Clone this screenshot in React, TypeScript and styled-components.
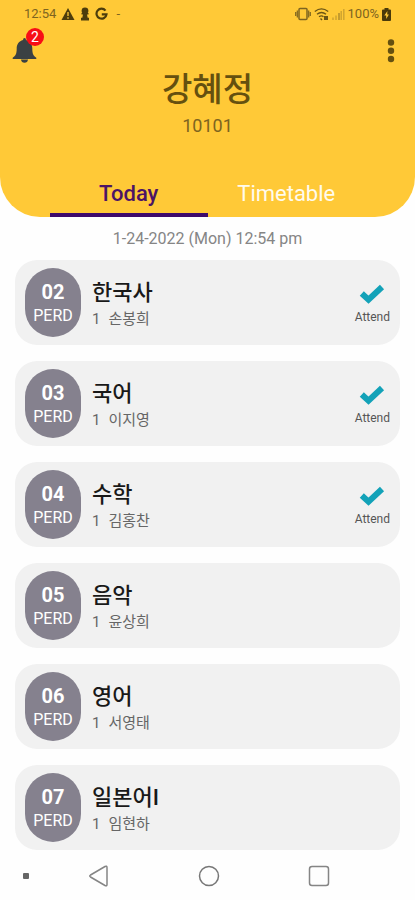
import React from "react";
import styled, { createGlobalStyle } from "styled-components";

const GlobalStyle = createGlobalStyle`
  *, *::before, *::after { box-sizing: border-box; }
  body {
    margin: 0;
    background: #fefefe;
    font-family: Roboto, "Noto Sans CJK KR", sans-serif;
  }
  button { border: 0; padding: 0; background: none; font: inherit; color: inherit; cursor: pointer; }
  h1, h2, p, ul { margin: 0; padding: 0; }
  svg { display: block; flex: none; }
`;

const Screen = styled.div`
  min-height: 100vh;
  display: flex;
  flex-direction: column;
`;

const Header = styled.header`
  background: #ffc937;
  border-radius: 0 0 40px 40px;
  display: flex;
  flex-direction: column;
`;

const StatusBar = styled.div`
  height: 28px;
  padding: 0 24px;
  display: flex;
  align-items: center;
  justify-content: space-between;
  color: #7d6420;
  font-size: 13px;
  line-height: 16px;
`;

const StatusGroup = styled.div<{ $gap: number }>`
  display: flex;
  align-items: center;
  gap: ${(p) => p.$gap}px;
`;

const AppBar = styled.div`
  height: 40px;
  padding: 0 16px 0 12px;
  display: flex;
  align-items: flex-start;
  justify-content: space-between;
`;

const BellButton = styled.button`
  position: relative;
  padding-top: 9px;
`;

const AlertCount = styled.span`
  position: absolute;
  top: 0;
  left: 14px;
  width: 18px;
  height: 18px;
  border-radius: 50%;
  background: #f80d16;
  color: #fff;
  font-size: 14px;
  line-height: 18px;
  text-align: center;
`;

const MenuButton = styled.button`
  padding-top: 10px;
`;

const Profile = styled.div`
  height: 102px;
  display: flex;
  flex-direction: column;
  align-items: center;
`;

const StudentName = styled.h1`
  font-size: 33px;
  line-height: 44px;
  font-weight: 500;
  color: #65500f;
`;

const StudentId = styled.p`
  margin-top: 2px;
  font-size: 18px;
  line-height: 24px;
  color: #7d6420;
`;

const Tabs = styled.div`
  height: 47px;
  padding: 0 50px;
  display: grid;
  grid-template-columns: 1fr 1fr;
`;

const Tab = styled.button<{ $active?: boolean }>`
  font-size: 22px;
  line-height: 28px;
  padding-top: 4px;
  font-weight: ${(p) => (p.$active ? 500 : 400)};
  color: ${(p) => (p.$active ? "#4c1465" : "#fffbed")};
  border-bottom: 4px solid ${(p) => (p.$active ? "#3e0a6b" : "transparent")};
`;

const DateLine = styled.p`
  padding: 12px 0 11px;
  text-align: center;
  font-size: 16px;
  line-height: 20px;
  color: #858585;
`;

const Lessons = styled.ul`
  list-style: none;
  padding: 0 15px;
  display: flex;
  flex-direction: column;
  gap: 16px;
`;

const LessonCard = styled.li`
  height: 85px;
  padding: 0 10px;
  display: flex;
  align-items: center;
  gap: 11px;
  border-radius: 22px;
  background: #f1f1f1;
`;

const Period = styled.div`
  width: 56px;
  height: 69px;
  padding-top: 2px;
  flex: none;
  display: flex;
  flex-direction: column;
  align-items: center;
  justify-content: center;
  border-radius: 28px;
  background: #85818e;
  color: #fff;
  font-size: 16px;
  line-height: 24px;
`;

const PeriodNumber = styled.strong`
  font-size: 20px;
  line-height: 24px;
  font-weight: 700;
`;

const LessonInfo = styled.div`
  flex: 1;
  padding-top: 4px;
`;

const Subject = styled.h2`
  font-size: 22px;
  line-height: 28px;
  font-weight: 500;
  color: #191919;
`;

const Teacher = styled.p`
  display: flex;
  gap: 8px;
  font-size: 15px;
  line-height: 24px;
  color: #666;
`;

const Attendance = styled.div`
  padding-top: 4px;
  display: flex;
  flex-direction: column;
  align-items: center;
  gap: 5px;
  font-size: 12px;
  line-height: 16px;
  color: #555;
`;

const NavBar = styled.nav`
  height: 50px;
  padding: 2px 85px 0 22px;
  display: flex;
  align-items: center;
  justify-content: space-between;
`;

const NavButtons = styled.div`
  display: flex;
  align-items: center;
  gap: 88px;
`;

const lessons = [
  { period: "02", subject: "한국사", teacher: "손봉희", attended: true },
  { period: "03", subject: "국어", teacher: "이지영", attended: true },
  { period: "04", subject: "수학", teacher: "김홍찬", attended: true },
  { period: "05", subject: "음악", teacher: "윤상희", attended: false },
  { period: "06", subject: "영어", teacher: "서영태", attended: false },
  { period: "07", subject: "일본어I", teacher: "임현하", attended: false },
];

const WarningIcon = () => (
  <svg width="14" height="14" viewBox="0 0 14 14">
    <path d="M7 1 13.5 13H.5Z" fill="#4d3d0c" />
    <path d="M7 5v4M7 10.2v1.5" stroke="#ffc937" strokeWidth="1.3" />
  </svg>
);

const PawnIcon = () => (
  <svg width="10" height="14" viewBox="0 0 10 14" fill="#4d3d0c">
    <circle cx="5" cy="3.8" r="3.4" />
    <path d="M1.500 6h7v1.500H7l.7 3.200H9V13.500H1v-2.800h1.300L3 7.500H1.500Z" />
  </svg>
);

const GoogleIcon = () => (
  <svg width="13" height="14" viewBox="0 0 13 14" fill="none" stroke="#4d3d0c" strokeWidth="2.200">
    <path d="M10.500 3.600A5 5 0 1 0 11.500 7.300H6.800" />
  </svg>
);

const VibrateIcon = () => (
  <svg width="16" height="14" viewBox="0 0 16 14" fill="none" stroke="#7d6420" strokeWidth="1.500">
    <rect x="4" y="1.500" width="8" height="11" rx="1" />
    <path d="M2.300 3.500v7M13.700 3.500v7M.7 5v4M15.300 5v4" strokeWidth="1.200" />
  </svg>
);

const WifiIcon = () => (
  <svg width="15" height="14" viewBox="0 0 15 14" fill="none" stroke="#6b5515" strokeWidth="1.400">
    <path d="M.8 4.500Q7.500-.8 14.200 4.500M3 7.200Q7.500 3.800 12 7.200M5 9.800Q7.500 8 9.500 9.800" />
    <path d="m6.500 11.500 1.500 1.500" />
    <path d="M10 9h4v4h-4Z" fill="#6b5515" stroke="none" />
  </svg>
);

const SignalIcon = () => (
  <svg width="13" height="12" viewBox="0 0 13 12" stroke="#b28d2c" strokeWidth="1.500">
    <path d="M1 9.500V12M4 7.500V12" opacity=".6" />
    <path d="M7 5v7" />
    <path d="M9.200 3v9M11.800 1v11" opacity=".6" />
  </svg>
);

const BatteryIcon = () => (
  <svg width="9" height="13" viewBox="0 0 9 13">
    <path d="M2.500 0h4v1.500H8q1 0 1 1V12q0 1-1 1H1q-1 0-1-1V2.500q0-1 1-1h1.500Z" fill="#4a3a0a" />
    <path d="M5.400 3 2.300 7.500h1.900V11l2.700-4.600H5.200Z" fill="#ffc937" />
  </svg>
);

const BellIcon = () => (
  <svg width="25" height="26" viewBox="0 0 25 26" fill="#3b4143">
    <path d="M12.500 1q1.500 0 1.500 2c4 1 6.300 4.200 6.300 8.500 0 5.500 1.200 7.500 4 9.200V22H.7v-1.300c2.800-1.700 4-3.700 4-9.200C4.700 7.200 7 4 11 3q0-2 1.500-2Z" />
    <path d="M9 22.500h7q-.5 3.200-3.500 3.200T9 22.500Z" />
  </svg>
);

const MoreIcon = () => (
  <svg width="16" height="26" viewBox="0 0 16 26" fill="#65500f">
    <circle cx="8" cy="4.500" r="3.200" />
    <circle cx="8" cy="12.700" r="3.200" />
    <circle cx="8" cy="21" r="3.200" />
  </svg>
);

const CheckIcon = () => (
  <svg width="26" height="20" viewBox="0 0 26 20" fill="none">
    <path d="m2.800 9.500 6.700 6.200L23 3" stroke="#13a2b8" strokeWidth="6" />
  </svg>
);

export default function App() {
  return (
    <Screen>
      <GlobalStyle />
      <Header>
        <StatusBar>
          <StatusGroup $gap={5}>
            <time>12:54</time>
            <WarningIcon />
            <PawnIcon />
            <GoogleIcon />
            <span>&nbsp;-</span>
          </StatusGroup>
          <StatusGroup $gap={3}>
            <VibrateIcon />
            <WifiIcon />
            <SignalIcon />
            <span>100%</span>
            <BatteryIcon />
          </StatusGroup>
        </StatusBar>
        <AppBar>
          <BellButton type="button" aria-label="Notifications">
            <BellIcon />
            <AlertCount>2</AlertCount>
          </BellButton>
          <MenuButton type="button" aria-label="More options">
            <MoreIcon />
          </MenuButton>
        </AppBar>
        <Profile>
          <StudentName>강혜정</StudentName>
          <StudentId>10101</StudentId>
        </Profile>
        <Tabs role="tablist">
          <Tab type="button" role="tab" aria-selected="true" $active>
            Today
          </Tab>
          <Tab type="button" role="tab" aria-selected="false">
            Timetable
          </Tab>
        </Tabs>
      </Header>
      <main>
        <DateLine>1-24-2022 (Mon) 12:54 pm</DateLine>
        <Lessons>
          {lessons.map((lesson) => (
            <LessonCard key={lesson.period}>
              <Period>
                <PeriodNumber>{lesson.period}</PeriodNumber>
                PERD
              </Period>
              <LessonInfo>
                <Subject>{lesson.subject}</Subject>
                <Teacher>
                  <span>1</span>
                  <span>{lesson.teacher}</span>
                </Teacher>
              </LessonInfo>
              {lesson.attended && (
                <Attendance>
                  <CheckIcon />
                  Attend
                </Attendance>
              )}
            </LessonCard>
          ))}
        </Lessons>
      </main>
      <NavBar aria-label="System">
        <svg width="8" height="8" viewBox="0 0 8 8">
          <rect x="1" y="1" width="6" height="6" rx="1" fill="#666" />
        </svg>
        <NavButtons>
          <button type="button" aria-label="Back">
            <svg width="22" height="22" viewBox="0 0 22 22" fill="none" stroke="#858585" strokeWidth="1.500">
              <path d="M2.500 10 17 1.500q2-1 2 1v17q0 2-2 1L2.500 12q-1.500-1 0-2Z" />
            </svg>
          </button>
          <button type="button" aria-label="Home">
            <svg width="22" height="22" viewBox="0 0 22 22" fill="none" stroke="#777" strokeWidth="1.500">
              <circle cx="11" cy="11" r="9.500" />
            </svg>
          </button>
          <button type="button" aria-label="Recent apps">
            <svg width="22" height="22" viewBox="0 0 22 22" fill="none" stroke="#858585" strokeWidth="1.500">
              <rect x="1.500" y="1.500" width="19" height="19" rx="2.500" />
            </svg>
          </button>
        </NavButtons>
      </NavBar>
    </Screen>
  );
}
